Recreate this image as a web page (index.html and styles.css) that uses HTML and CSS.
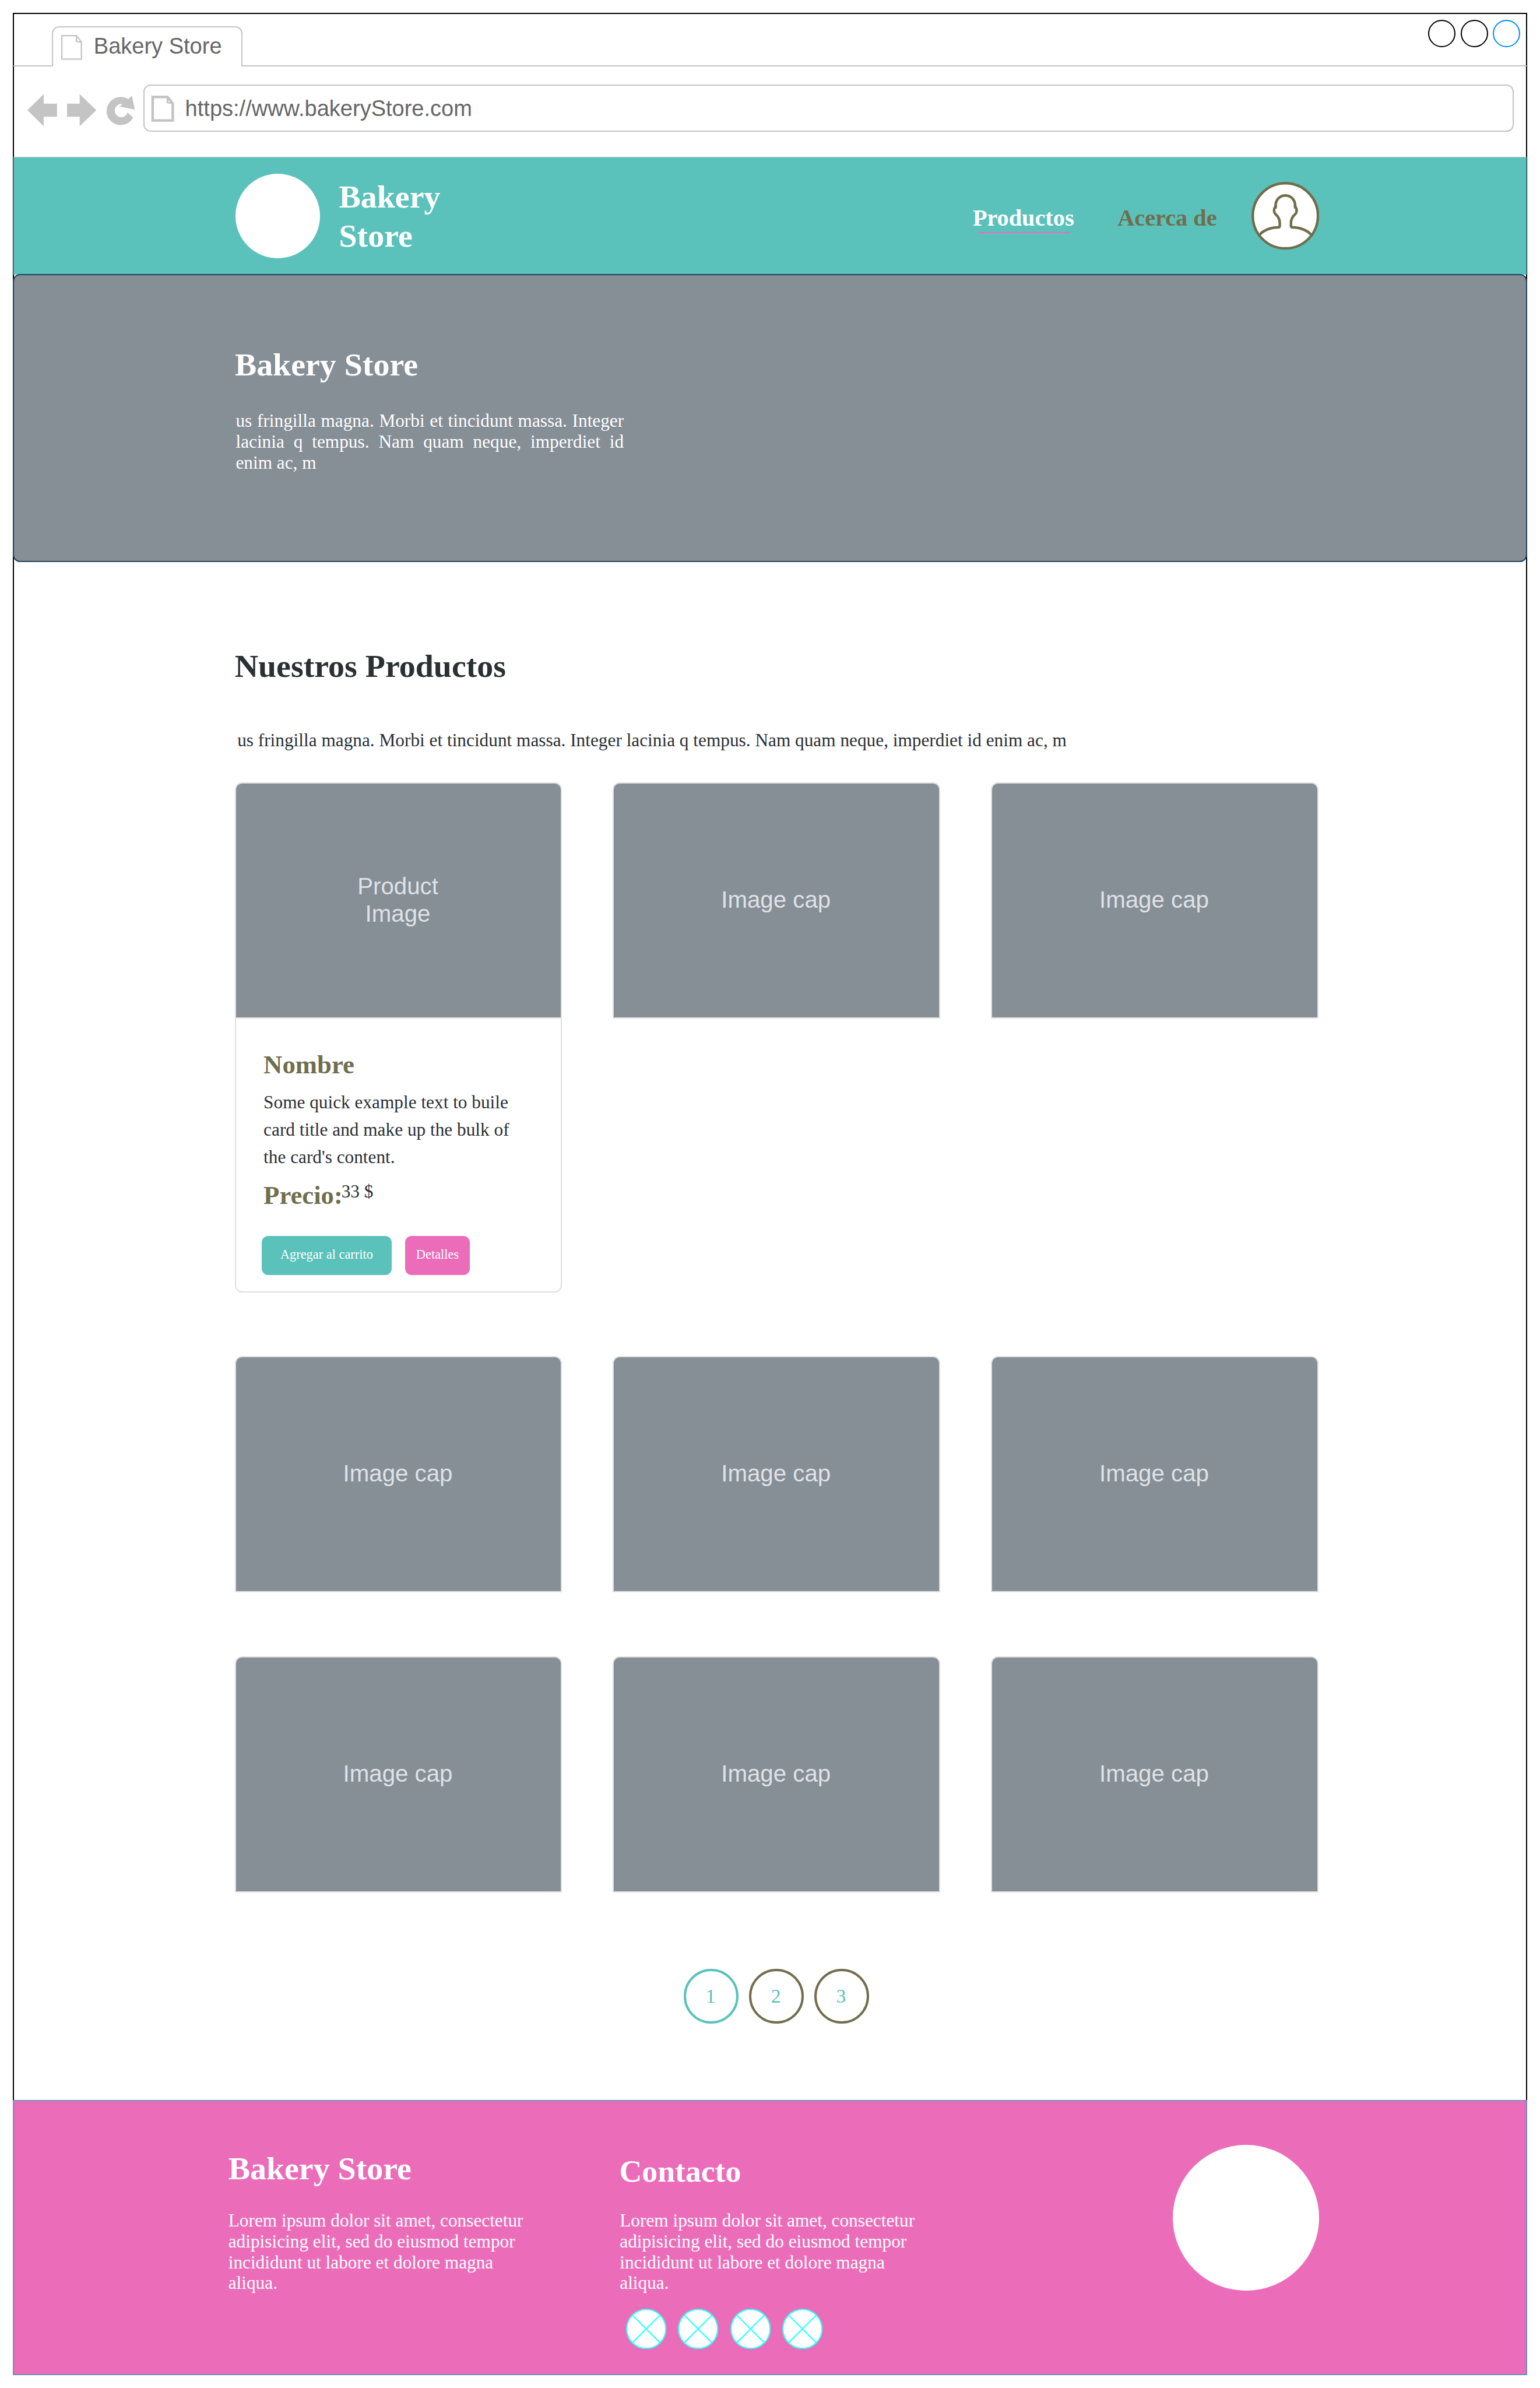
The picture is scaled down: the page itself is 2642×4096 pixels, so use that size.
FILE: index.html
```html
<!DOCTYPE html>
<html lang="es">
<head>
<meta charset="utf-8">
<title>Bakery Store</title>
<link rel="stylesheet" href="styles.css">
</head>
<body>
<div class="window">
  <div class="chrome">
    <div class="tabstrip">
      <div class="tab">
        <svg class="tab-icon" viewBox="47 27 16 19" fill="none" stroke="#c4c4c4"><path d="M47.5 27.5H58.7L62.5 32.3V45.5H47.5Z"/><path d="M58.7 27.5V31.9L62.5 32.5"/></svg>
        <span class="tab-title">Bakery Store</span>
      </div>
      <div class="window-buttons">
        <span class="dot"></span><span class="dot"></span><span class="dot dot-active"></span>
      </div>
    </div>
    <div class="toolbar">
      <svg class="tool back" viewBox="20.9 72 22.7 25"><path d="M20.9 84.5L33.4 72.2V79.5H43.6V89.5H33.4V96.8Z"/></svg>
      <svg class="tool forward" viewBox="51.5 72 22.5 25"><path d="M74 84.5L61.2 72.2V79.5H51.5V89.5H61.2V96.8Z"/></svg>
      <svg class="tool reload" viewBox="82 72 22 25"><path d="M98.5 76L101.3 73.3L103.6 84.1L92.1 81.7L94.1 79.8A5 5.1 0 1 0 98 86.3L102.3 90.2A10.8 10.8 0 1 1 98.5 76Z"/></svg>
      <div class="address">
        <svg class="address-icon" viewBox="116 73 18 21" fill="none" stroke="#c4c4c4" stroke-width="2"><path d="M117.3 74.5H128.7L132.7 79.5V92.5H117.3Z"/><path stroke-width="1.2" d="M128.7 74.3V78.8L132.7 79.6"/></svg>
        <span class="address-text">https://www.bakeryStore.com</span>
      </div>
    </div>
  </div>

  <header class="navbar">
    <div class="logo"></div>
    <div class="brand">Bakery<br>Store</div>
    <nav class="links">
      <a class="link link-active">Productos</a>
      <a class="link">Acerca de</a>
    </nav>
    <svg class="avatar" viewBox="0 0 52 52" stroke="#706e4d" stroke-width="2" fill="none">
      <circle cx="26" cy="26" r="25" fill="#fff"/>
      <path d="M6.5 40.3C9 37.4 14.5 34.9 20.4 34.9Q21.7 34.9 21.7 33.4V31.5C21.7 28.5 20.3 26.3 18.4 24.7C17.2 23.8 17.1 21.2 17.8 19.9L18.5 18.7C18.3 14 21.6 10.4 26 10.4C30.4 10.4 33.7 14 33.5 18.7L34.2 19.9C34.9 21.2 34.8 23.8 33.6 24.7C31.7 26.3 30.3 28.5 30.3 31.5V33.4Q30.3 34.9 31.6 34.9C37.5 34.9 43 37.4 45.5 40.3"/>
      <path d="M18.5 18V20.4M33.5 18V20.4"/>
    </svg>
  </header>

  <section class="hero">
    <h1 class="heading">Bakery Store</h1>
    <p class="hero-text">us fringilla magna. Morbi et tincidunt massa. Integer lacinia q tempus. Nam quam neque, imperdiet id enim ac, m</p>
  </section>

  <main class="products">
    <h2 class="heading">Nuestros Productos</h2>
    <p class="intro">us fringilla magna. Morbi et tincidunt massa. Integer lacinia q tempus. Nam quam neque, imperdiet id enim ac, m</p>
    <div class="grid">
      <article class="card">
        <div class="cap">Product<br>Image</div>
        <div class="card-body">
          <h3 class="name">Nombre</h3>
          <p class="description">Some quick example text to buile<br>card title and make up the bulk of<br>the card's content.</p>
          <div class="price"><span class="name">Precio:</span><span class="amount">33 $</span></div>
          <div class="actions">
            <button class="button add">Agregar al carrito</button>
            <button class="button details">Detalles</button>
          </div>
        </div>
      </article>
      <div class="cap">Image cap</div>
      <div class="cap">Image cap</div>
      <div class="cap">Image cap</div>
      <div class="cap">Image cap</div>
      <div class="cap">Image cap</div>
      <div class="cap">Image cap</div>
      <div class="cap">Image cap</div>
      <div class="cap">Image cap</div>
    </div>
    <div class="pagination">
      <span class="page page-current">1</span>
      <span class="page">2</span>
      <span class="page">3</span>
    </div>
  </main>

  <footer class="footer">
    <div class="about">
      <h2 class="heading">Bakery Store</h2>
      <p class="footer-text">Lorem ipsum dolor sit amet, consectetur adipisicing elit, sed do eiusmod tempor incididunt ut labore et dolore magna aliqua.</p>
    </div>
    <div class="contact">
      <h2 class="heading">Contacto</h2>
      <p class="footer-text">Lorem ipsum dolor sit amet, consectetur adipisicing elit, sed do eiusmod tempor incididunt ut labore et dolore magna aliqua.</p>
      <div class="social">
        <svg class="social-icon" viewBox="0 0 31 31"><circle cx="15.5" cy="15.5" r="15"/><path d="M4.9 4.9L26.1 26.1M26.1 4.9L4.9 26.1"/></svg>
        <svg class="social-icon" viewBox="0 0 31 31"><circle cx="15.5" cy="15.5" r="15"/><path d="M4.9 4.9L26.1 26.1M26.1 4.9L4.9 26.1"/></svg>
        <svg class="social-icon" viewBox="0 0 31 31"><circle cx="15.5" cy="15.5" r="15"/><path d="M4.9 4.9L26.1 26.1M26.1 4.9L4.9 26.1"/></svg>
        <svg class="social-icon" viewBox="0 0 31 31"><circle cx="15.5" cy="15.5" r="15"/><path d="M4.9 4.9L26.1 26.1M26.1 4.9L4.9 26.1"/></svg>
      </div>
    </div>
    <div class="footer-logo"></div>
  </footer>
</div>
</body>
</html>
```
FILE: styles.css
```css
/* 1rem is ten layout units */
html {
  font-size: 22.3709px;
}

* {
  box-sizing: border-box;
}

body {
  margin: 0;
  background: #fff;
  color: #2b3033;
  font-family: "Liberation Serif", "Times New Roman", serif;
  font-size: 1.4rem;
  line-height: 1.6rem;
}

h1, h2, h3, p {
  margin: 0;
}

svg {
  display: block;
  flex: none;
}

.window {
  width: 116.1rem;
  margin: 1rem 0 0 1rem;
  border: 2px solid #000;
  border-bottom: 0;
}

/* Browser chrome */
.chrome {
  display: flex;
  flex-direction: column;
  height: calc(11.05rem - 2px);
  margin: 0 -1px;
  border-bottom: 1px solid #c4c4c4;
  color: #666;
  font-family: "Liberation Sans", Arial, sans-serif;
  font-size: 1.7rem;
  line-height: 2rem;
}

.tabstrip {
  display: flex;
  justify-content: space-between;
  height: calc(4.1rem - 2px);
  padding: 0 calc(0.5rem - 1px) 0 calc(3rem - 1px);
  border-bottom: 2px solid #c4c4c4;
}

.tab {
  display: flex;
  gap: 0.89rem;
  align-self: flex-end;
  align-items: flex-start;
  flex: none;
  width: 14.6rem;
  height: 3.1rem;
  margin-bottom: -2px;
  padding-left: calc(0.7rem - 2px);
  border: 2px solid #c4c4c4;
  border-bottom: 0;
  border-radius: 0.55rem 0.55rem 0 0;
  background: #fff;
}

.tab-icon {
  width: 1.6rem;
  height: 1.9rem;
  margin-top: calc(0.7rem - 2px);
}

.tab-title {
  margin-top: calc(0.56rem - 2px);
  white-space: nowrap;
}

.window-buttons {
  display: flex;
  gap: 0.4rem;
  margin-top: calc(0.5rem - 2px);
}

.dot {
  width: 2.1rem;
  height: 2.1rem;
  border: 2px solid #000;
  border-radius: 50%;
}

.dot-active {
  border-color: #008cff;
}

.toolbar {
  display: flex;
  align-items: flex-start;
  padding: 1.4rem 0 0 calc(1.09rem - 1px);
}

.tool {
  height: 2.5rem;
  margin-top: 0.7rem;
  fill: #c4c4c4;
}

.back {
  width: 2.27rem;
  margin-right: 0.79rem;
}

.forward {
  width: 2.25rem;
  margin-right: 0.8rem;
}

.reload {
  width: 2.2rem;
  margin-right: 0.6rem;
}

.address {
  display: flex;
  align-items: center;
  gap: 0.8rem;
  width: 105.1rem;
  height: 3.6rem;
  padding-left: calc(0.6rem - 2px);
  border: 2px solid #c4c4c4;
  border-radius: 0.55rem;
}

.address-icon {
  width: 1.8rem;
  height: 2.1rem;
  margin-top: 0.1rem;
}

.address-text {
  margin-top: 0.1rem;
}

/* Site header */
.navbar {
  display: flex;
  align-items: center;
  height: 9rem;
  margin: 0 -1px;
  padding: 0 15.9rem 0 17rem;
  background: #5ac2bb;
}

.logo {
  width: 6.5rem;
  height: 6.5rem;
  border-radius: 50%;
  background: #fff;
}

.brand {
  margin: 0.05rem 0 0 1.45rem;
  color: #fff;
  font-size: 2.5rem;
  font-weight: bold;
  line-height: 3rem;
}

.links {
  display: flex;
  gap: 3.34rem;
  margin: 0.38rem 2.64rem 0 auto;
}

.link {
  position: relative;
  color: #706e4d;
  font-size: 1.8rem;
  font-weight: bold;
  line-height: 2rem;
}

.link-active {
  color: #fff;
}

.link-active::after {
  content: "";
  position: absolute;
  top: 2.06rem;
  left: 0.47rem;
  width: 7rem;
  height: 2px;
  background: #eb6db9;
}

.avatar {
  width: 5.2rem;
  height: 5.2rem;
}

/* Hero */
.heading {
  font-size: 2.5rem;
  font-weight: bold;
  line-height: 3rem;
}

.hero {
  height: 22.1rem;
  margin: -0.05rem -2px 0;
  padding: calc(5.46rem - 2px) 0 0 calc(17.01rem - 2px);
  border: 2px solid #23445d;
  border-radius: 0.55rem;
  background: #868e96;
  color: #fff;
}

.hero-text {
  width: 29.76rem;
  margin: 2.01rem 0 0 0.07rem;
  text-align: justify;
}

/* Products */
.products {
  height: 117.9rem;
  padding: 6.48rem 0 0 calc(17rem - 2px);
}

.intro {
  margin: 3.37rem 0 2.45rem 0.2rem;
}

.grid {
  display: grid;
  grid-template-columns: repeat(3, 25.1rem);
  gap: 4.9rem 3.9rem;
  align-items: start;
}

.cap {
  display: flex;
  align-items: center;
  justify-content: center;
  height: 18.1rem;
  padding-right: 0.08rem;
  border: 2px solid #dfdfdf;
  border-radius: 0.55rem 0.55rem 0 0;
  background: #868e96;
  color: #dee2e6;
  font-family: "Liberation Sans", Arial, sans-serif;
  font-size: 1.8rem;
  line-height: 2.1rem;
  text-align: center;
}

.card-body {
  height: 21rem;
  padding: 2.385rem 0 0 calc(2.21rem - 2px);
  border: 2px solid #dfdfdf;
  border-top: 0;
  border-radius: 0 0 0.55rem 0.55rem;
}

.name {
  color: #706e4d;
  font-size: 2rem;
  font-weight: bold;
  line-height: 2.4rem;
}

.description {
  margin-top: 0.63rem;
  line-height: 2.1rem;
}

.price {
  display: flex;
  align-items: flex-start;
  margin-top: 0.665rem;
}

.amount {
  margin: 0.08rem 0 0 -0.1rem;
}

.actions {
  display: flex;
  gap: 1rem;
  margin: 1.885rem 0 0 -0.16rem;
}

.button {
  height: 3rem;
  padding: 0 0 0.12rem;
  border: 0;
  border-radius: 0.5rem;
  color: #fff;
  font: 1rem/1.2rem "Liberation Serif", "Times New Roman", serif;
}

.add {
  width: 10rem;
  background: #5ac2bb;
}

.details {
  width: 5rem;
  background: #eb6db9;
}

.pagination {
  display: flex;
  gap: 0.8rem;
  margin: 5.85rem 0 0 34.45rem;
}

.page {
  display: flex;
  align-items: center;
  justify-content: center;
  width: 4.2rem;
  height: 4.2rem;
  padding-right: 0.1rem;
  border: 0.2rem solid #706e4d;
  border-radius: 50%;
  color: #5ac2bb;
  font-size: 1.5rem;
}

.page-current {
  border-color: #5ac2bb;
}

/* Footer */
.footer {
  display: grid;
  grid-template-columns: 29.99rem 42.45rem 11.2rem;
  align-items: start;
  height: 21.1rem;
  margin: 0 -2px;
  padding-left: calc(16.51rem - 2px);
  border: 2px solid #6c8ebf;
  background: #eb6db9;
  color: #fff;
}

.about {
  padding-top: calc(3.78rem - 2px);
}

.contact {
  padding-top: calc(4.01rem - 2px);
}

.contact .heading {
  font-size: 2.4rem;
}

.footer-text {
  width: 23.2rem;
  margin-top: 1.68rem;
}

.contact .footer-text {
  margin: 1.45rem 0 1.14rem 0.03rem;
}

.social {
  display: flex;
  gap: 0.9rem;
  margin-left: 0.5rem;
}

.social-icon {
  width: 3.1rem;
  height: 3.1rem;
  fill: #fff;
  stroke: #3ff;
  stroke-width: 1;
}

.footer-logo {
  width: 11.2rem;
  height: 11.2rem;
  margin-top: calc(3.45rem - 2px);
  border-radius: 50%;
  background: #fff;
}
```
